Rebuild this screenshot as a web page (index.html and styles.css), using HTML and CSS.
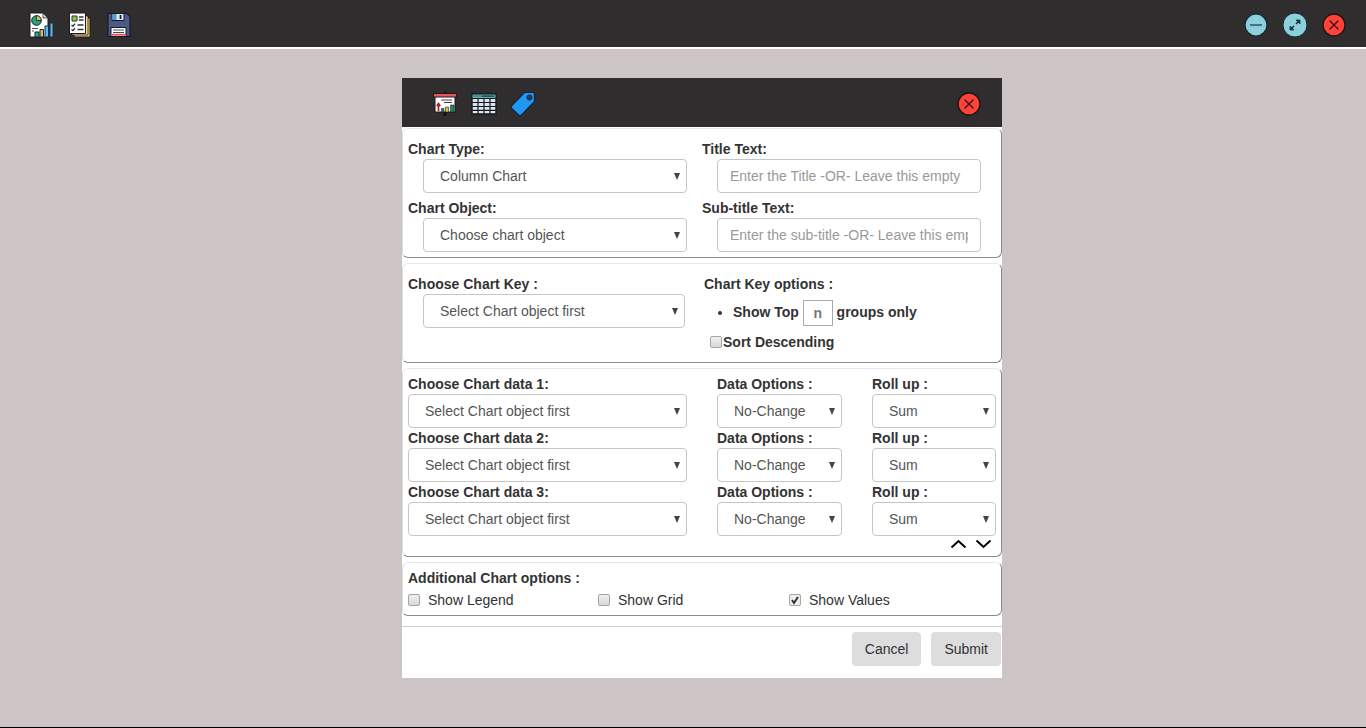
FILE: index.html
```html
<!DOCTYPE html>
<html lang="en">
<head>
<meta charset="utf-8">
<title>Chart options</title>
<link rel="stylesheet" href="styles.css">
</head>
<body>
<svg class="defs" aria-hidden="true">
  <symbol id="close" viewBox="0 0 26 26"><circle cx="13" cy="13" r="11" fill="#ff4338" stroke="#201516" stroke-width="1.4"/><path d="M8.5 8.5l9 9M17.500 8.500l-9 9" stroke="#3a1114" stroke-width="1.300" fill="none"/></symbol>
</svg>
<header class="topbar">
  <div class="tools">
    <button class="icon" aria-label="Chart report"><svg viewBox="0 0 26 26"><path d="M2 1h13l5 5v19H2z" fill="#fff" stroke="#1c1b1c"/><path d="M15 1v5h5z" fill="#ccd3dc" stroke="#1c1b1c" stroke-width=".7"/><circle cx="8.500" cy="8.500" r="4.800" fill="#20a678" stroke="#17252a"/><path d="M8.500 8.500V3.700a4.800 4.800 0 0 1 4.800 4.800z" fill="#f0b25d" stroke="#17252a" stroke-width=".8"/><path d="M4 16.500h6M4 19h2" stroke="#4b5260"/><path d="M7 20h4v5H7z" fill="#2bae83" stroke="#17252a"/><path d="M12 17.500h3.500V25H12z" fill="#e4b45f" stroke="#17252a"/><path d="M17 14h3.500v11H17zM22 11h3v14h-3z" fill="#5db9f2" stroke="#173048"/></svg></button>
    <button class="icon" aria-label="Checklist"><svg viewBox="0 0 26 26"><path d="M7 6h16v19H7z" fill="#f4cf75" stroke="#1c1b1c"/><path d="M5 4h16v19H5z" fill="#f8dc92" stroke="#1c1b1c" stroke-width=".8"/><path d="M2.500 1h16v20.500h-16z" fill="#fff" stroke="#1c1b1c"/><path d="M5 4h5v5H5z" fill="#8fc652" stroke="#25371f"/><path d="M12 5h4.500M12 8h4.500M10.500 13h6M10.500 17.500h6" stroke="#333" stroke-width="1.300"/><path d="M4.500 13l1.500 1.200L8 11.700M4.500 17.500L6 18.700 8 16.200" fill="none" stroke="#222" stroke-width="1.200"/></svg></button>
    <button class="icon" aria-label="Save"><svg viewBox="0 0 26 26"><path d="M2 1.500h19l3 3V24.500H2z" fill="#4a5a84" stroke="#17192b" stroke-width="1.200"/><path d="M6 1.500h12v7H6z" fill="#dce6ef" stroke="#17192b"/><path d="M6.500 2h4v6h-4z" fill="#579ac9"/><path d="M14.500 3v4" stroke="#17192b" stroke-width="1.700"/><path d="M5 15.500h15v9H5z" fill="#fff" stroke="#17192b"/><path d="M7 18h11M7 20.500h11" stroke="#434858"/><path d="M5.500 22.700h14" stroke="#ee4c50" stroke-width="1.800"/></svg></button>
  </div>
  <div class="tools">
    <button class="icon" aria-label="Minimize"><svg viewBox="0 0 26 26"><circle cx="13" cy="13" r="11" fill="#8ccfdd" stroke="#16252b" stroke-width="1.200"/><path d="M7 13h12" stroke="#173743" stroke-width="1.200"/></svg></button>
    <button class="icon" aria-label="Maximize"><svg viewBox="0 0 26 26"><circle cx="13" cy="13" r="12" fill="#8ccfdd" stroke="#16252b" stroke-width="1"/><path d="M9 17l3-3M14 12l3-3" stroke="#173743" stroke-width="1.600"/><path d="M14 8h4v4zM8 14v4h4z" fill="#173743" stroke="#173743" stroke-width=".8"/></svg></button>
    <button class="icon" aria-label="Close window"><svg><use href="#close"/></svg></button>
  </div>
</header>
<main class="stage">
  <form class="dialog">
    <div class="dialog-head">
      <div class="tools">
        <button type="button" class="icon" aria-label="Chart"><svg viewBox="0 0 26 26"><path d="M13 1v24" stroke="#111" stroke-width="3"/><path d="M3 4h20v17H3z" fill="#fff" stroke="#171717"/><path d="M1.500 2.500h23v3.500h-23z" fill="#e4575c" stroke="#241719"/><path d="M9 9h11M12 11.500h8" stroke="#444"/><path d="M6.500 20v-6M4.800 15l1.700-2.500L8.200 15" stroke="#b51c25" stroke-width="1.700" fill="none"/><path d="M9.500 17.500h2.500V21H9.500z" fill="#178a6c" stroke="#222" stroke-width=".6"/><path d="M13.500 16h3v5h-3z" fill="#e5b84c" stroke="#222" stroke-width=".6"/><path d="M18.500 14H22v7h-3.500z" fill="#178a6c" stroke="#222" stroke-width=".6"/></svg></button>
        <button type="button" class="icon" aria-label="Table"><svg viewBox="0 0 26 26"><path d="M1 3h24v20H1z" fill="#dce3ef" stroke="#12191e" stroke-width="1.400"/><path d="M1.700 3.700h22.600v3H1.700z" fill="#3d9695"/><path d="M11 5.200h12" stroke="#195b5e" stroke-width="1.500"/><path d="M1 7.500h24M1 11.500h24M1 15.500h24M1 19.300h24M7 7v16M13 7v16M19 7v16" stroke="#12191e" stroke-width="1.200"/></svg></button>
        <button type="button" class="icon" aria-label="Label"><svg viewBox="0 0 26 26"><path d="M14.500 1.500h8q2 0 2 2v7L11.500 24q-1.500 1.300-3 0L1.800 17.500q-1.300-1.500 0-3z" fill="#2196f3" stroke="#10253a" stroke-width="1.200"/><circle cx="19.500" cy="6.500" r="2.500" fill="#20445f" stroke="#10253a"/></svg></button>
      </div>
      <button type="button" class="icon" aria-label="Close dialog"><svg><use href="#close"/></svg></button>
    </div>

    <section class="group titles">
      <div class="field"><label for="type">Chart Type:</label><select id="type"><option>Column Chart</option></select></div>
      <div class="field"><label for="title">Title Text:</label><input id="title" type="text" placeholder="Enter the Title -OR- Leave this empty"></div>
      <div class="field"><label for="object">Chart Object:</label><select id="object"><option>Choose chart object</option></select></div>
      <div class="field"><label for="subtitle">Sub-title Text:</label><input id="subtitle" type="text" placeholder="Enter the sub-title -OR- Leave this empty"></div>
    </section>

    <section class="group keys">
      <div class="field"><label for="key">Choose Chart Key :</label><select id="key"><option>Select Chart object first</option></select></div>
      <div class="key-options">
        <h2>Chart Key options :</h2>
        <ul><li><label for="top">Show Top</label> <input id="top" class="count" type="text" placeholder="n"> groups only</li></ul>
        <label class="sort"><input type="checkbox"><span>Sort Descending</span></label>
      </div>
    </section>

    <section class="group series">
      <div class="row">
        <div><label for="d1">Choose Chart data 1:</label><select id="d1"><option>Select Chart object first</option></select></div>
        <div><label for="o1">Data Options :</label><select id="o1"><option>No-Change</option></select></div>
        <div><label for="r1">Roll up :</label><select id="r1"><option>Sum</option></select></div>
      </div>
      <div class="row">
        <div><label for="d2">Choose Chart data 2:</label><select id="d2"><option>Select Chart object first</option></select></div>
        <div><label for="o2">Data Options :</label><select id="o2"><option>No-Change</option></select></div>
        <div><label for="r2">Roll up :</label><select id="r2"><option>Sum</option></select></div>
      </div>
      <div class="row">
        <div><label for="d3">Choose Chart data 3:</label><select id="d3"><option>Select Chart object first</option></select></div>
        <div><label for="o3">Data Options :</label><select id="o3"><option>No-Change</option></select></div>
        <div><label for="r3">Roll up :</label><select id="r3"><option>Sum</option></select></div>
      </div>
      <div class="arrows">
        <button type="button" aria-label="Fewer rows"><svg viewBox="0 0 17 12"><path d="M1.500 9.500l7-6.500 7 6.500"/></svg></button>
        <button type="button" aria-label="More rows"><svg viewBox="0 0 17 12"><path d="M1.500 2.500l7 6.500 7-6.500"/></svg></button>
      </div>
    </section>

    <section class="group extra">
      <h2>Additional Chart options :</h2>
      <div class="checks">
        <label><input type="checkbox">Show Legend</label>
        <label><input type="checkbox">Show Grid</label>
        <label><input type="checkbox" checked>Show Values</label>
      </div>
    </section>

    <footer class="actions"><button type="button">Cancel</button><button type="button">Submit</button></footer>
  </form>
</main>
</body>
</html>
```
FILE: styles.css
```css
* { box-sizing: border-box; }
body {
  margin: 0;
  min-height: 100vh;
  display: flex;
  flex-direction: column;
  background: #cdc4c5;
  border-bottom: 1px solid #000;
  color: #333;
  font: 14px/20px "Liberation Sans", Arial, sans-serif;
}
button, input, select { font: inherit; color: inherit; }
button { border: 0; padding: 0; background: none; cursor: pointer; }
.defs { position: absolute; width: 0; height: 0; }
.topbar {
  display: flex;
  justify-content: space-between;
  align-items: center;
  height: 49px;
  padding: 2px 19px 0 28px;
  background: #302d2e;
  border-bottom: 2px solid #fff;
}
.tools { display: flex; gap: 13px; }
.icon, .icon svg { display: block; width: 26px; height: 26px; }
.stage { padding: 29px 0 49px 38px; }
.dialog { width: 600px; max-width: 100%; margin: 0 auto; background: #fff; }
.dialog-head {
  display: flex;
  justify-content: space-between;
  align-items: center;
  height: 49px;
  padding: 2px 20px 0 30px;
  background: #302d2e;
}
.group {
  margin: 1px 0 5px;
  border: 1px solid;
  border-color: #e9e9e9 #8a8a8a #8a8a8a #ddd;
  border-radius: 6px;
  padding: 5px;
}
.group + .group { margin-top: 0; }
label, h2 { display: block; margin: 0; font-size: 14px; font-weight: 700; }
select, input[type="text"] {
  display: block;
  width: 100%;
  height: 34px;
  border: 1px solid #c6c6c6;
  border-radius: 4px;
  background-color: #fff;
  color: #555;
  padding: 6px 12px;
}
select {
  appearance: none;
  padding: 6px 16px;
  background-image: url("data:image/svg+xml,%3Csvg xmlns='http://www.w3.org/2000/svg' width='6' height='7'%3E%3Cpath d='M0 0h6L3 7z' fill='%23444'/%3E%3C/svg%3E");
  background-repeat: no-repeat;
  background-position: right 6px center;
}
input::placeholder { color: #999; opacity: 1; }
.titles { display: grid; grid-template-columns: 1fr 1fr; gap: 5px 0; padding-top: 10px; }
.field select, .field input { width: 264px; max-width: 100%; margin-left: 15px; }
.keys { display: grid; grid-template-columns: 1fr 1fr; gap: 4px; padding: 10px 5px; }
.keys .field select { width: 262px; }
.key-options { font-weight: 700; }
.key-options ul { margin: 0; padding: 5px 0 0 29px; }
.key-options li { height: 26px; line-height: 26px; }
.key-options li label, .key-options li input[type="text"] { display: inline-block; }
.key-options li .count {
  width: 30px;
  height: 26px;
  padding: 0;
  border-color: #aaa;
  border-radius: 0;
  text-align: center;
  vertical-align: middle;
}
.count::placeholder { color: #777; }
input[type="checkbox"] {
  appearance: none;
  flex: none;
  width: 12px;
  height: 12px;
  margin: 0;
  border: 1px solid #a5a5a5;
  border-radius: 2px;
  background: linear-gradient(#eee, #d9d9d9);
}
input[type="checkbox"]:checked {
  background: url("data:image/svg+xml,%3Csvg xmlns='http://www.w3.org/2000/svg' width='10' height='10'%3E%3Cpath d='M2 5l2 3 4-6' fill='none' stroke='%23333' stroke-width='2'/%3E%3C/svg%3E") center no-repeat #eee;
}
.sort { display: flex; align-items: center; gap: 1px; padding: 7px 0 0 6px; }
.row { display: grid; grid-template-columns: 279px 125px 124px; gap: 30px; }
.arrows { display: flex; justify-content: flex-end; gap: 8px; padding: 2px 4px 1px 0; }
.arrows svg { display: block; width: 17px; height: 12px; fill: none; stroke: #000; stroke-width: 2; }
.extra { margin-bottom: 10px; }
.checks { display: grid; grid-template-columns: 190px 191px 1fr; padding-top: 2px; }
.checks label { display: flex; align-items: center; gap: 8px; font-weight: 400; }
.actions {
  display: flex;
  justify-content: flex-end;
  gap: 10px;
  border-top: 1px solid #ccc;
  padding: 5px 1px 12px;
}
.actions button { height: 34px; padding: 0 13px; border-radius: 4px; background: #ddd; }
```
